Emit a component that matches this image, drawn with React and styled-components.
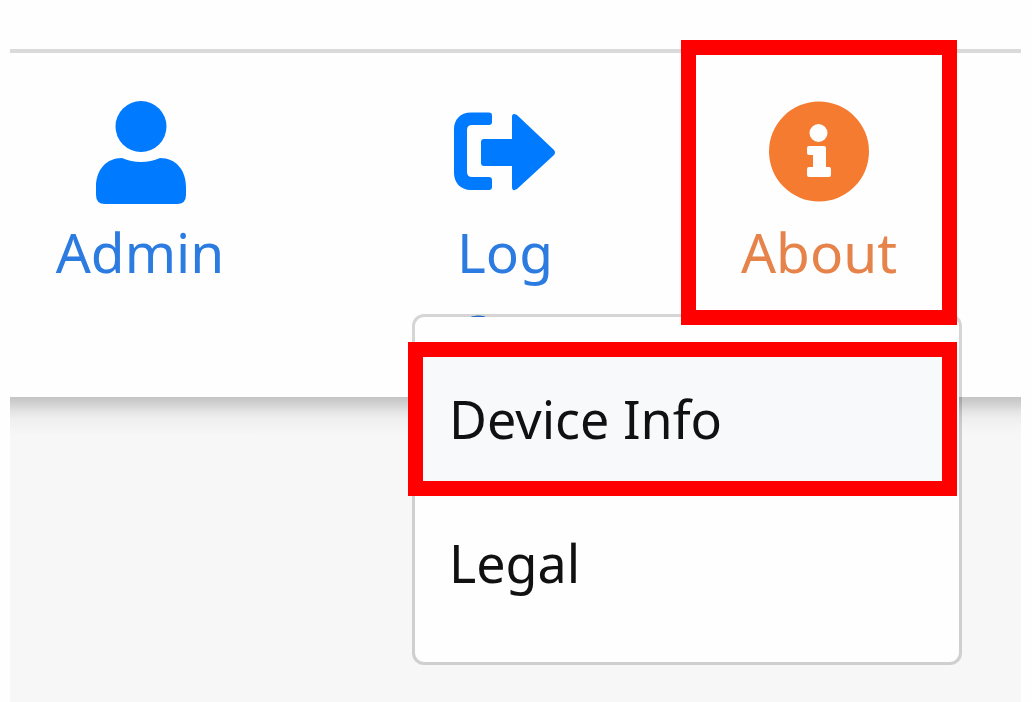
import React from "react";
import styled, { createGlobalStyle } from "styled-components";

const GlobalStyle = createGlobalStyle`
  *, *::before, *::after { box-sizing: border-box; }
  body {
    margin: 0;
    background: #fefefe;
    font-family: "Noto Sans", "Open Sans", sans-serif;
  }
`;

const Page = styled.div`
  min-height: 100vh;
  padding: 49px 11px 0 10px;
  display: flex;
  flex-direction: column;
`;

const Toolbar = styled.nav`
  display: grid;
  grid-template-columns: 260fr 59fr 352fr 276fr 64fr;
  height: 348px;
  border-top: 4px solid #dadada;
  background: #fefefe;
`;

const Content = styled.main`
  flex: 1;
  background: #f7f7f7 linear-gradient(
    #c5c5c5 0px, #cbcbcb 4px, #d6d6d6 9px, #e3e3e3 14px,
    #eeeeee 21px, #f3f3f3 29px, #f7f7f7 38px
  ) no-repeat;
`;

const NavItem = styled.div`
  grid-column: ${(p) => p.$column};
  position: relative;
  display: flex;
  justify-content: center;
  align-items: flex-start;
`;

const NavButton = styled.button`
  display: flex;
  flex-direction: column;
  align-items: center;
  gap: 3px;
  margin: 0;
  padding: 47px 0 0;
  border: 0;
  background: none;
  font: inherit;
  color: ${(p) => p.$color};
  cursor: pointer;
`;

const NavIcon = styled.svg`
  width: 108px;
  height: 108px;
  fill: ${(p) => p.$color};
`;

const NavLabel = styled.span`
  max-width: ${(p) => (p.$narrow ? "120px" : "none")};
  font-size: 55px;
  line-height: 82px;
  text-align: center;
`;

const Menu = styled.div`
  position: absolute;
  z-index: 1;
  top: 261px;
  right: -5px;
  width: 550px;
  padding: 29px 0 28px;
  border: 3px solid rgba(0, 0, 0, 0.16);
  border-radius: 12px;
  background: #fefefe;
  background-clip: padding-box;
`;

const MenuRow = styled.div`
  position: relative;
`;

const MenuLink = styled.a`
  display: block;
  padding: 34px 34px 32px;
  background: ${(p) => (p.$active ? "#f8f9fb" : "transparent")};
  color: #111;
  font-size: 52px;
  line-height: 78px;
  text-decoration: none;
`;

const Highlight = styled.span`
  position: absolute;
  z-index: 2;
  inset: ${(p) => p.$inset};
  border: 15px solid #f00;
  pointer-events: none;
`;

const blue = "#007bff";
const orange = "#f47b30";

function UserIcon() {
  return (
    <NavIcon viewBox="0 0 108 108" $color={blue} aria-hidden="true">
      <circle cx="55" cy="26.5" r="25.5" />
      <path d="M10 87C10 70 20 58 36 58Q45 62 55 62Q65 62 74 58C90 58 100 70 100 87V95Q100 104 91 104H19Q10 104 10 95Z" />
    </NavIcon>
  );
}

function SignOutIcon() {
  return (
    <NavIcon viewBox="0 0 108 108" $color={blue} aria-hidden="true">
      <path d="M20 12.500H38Q41 12.500 41 15.500V22Q41 25 38 25H21Q16 25 16 30V72Q16 77 21 77H38Q41 77 41 80V87Q41 90 38 90H20C9 90 3 82 3 73V29C3 20 9 12.500 20 12.500Z" />
      <path d="M33 39H61V17Q61 12 66 15L103 50Q105 52.500 103 55L66 89Q61 92 61 87V66H33Q30 66 30 63V42Q30 39 33 39Z" />
    </NavIcon>
  );
}

function InfoIcon() {
  return (
    <NavIcon viewBox="0 0 108 108" $color={orange} aria-hidden="true">
      <path
        fillRule="evenodd"
        d="M54 1.500A50 50 0 1 1 54 101.500A50 50 0 1 1 54 1.500ZM53.500 24A9 9 0 1 0 53.500 42A9 9 0 1 0 53.500 24ZM44 46Q42 46 42 48V53Q42 55 44 55H48V67H44Q42 67 42 69V75Q42 77 44 77H64Q66 77 66 75V69Q66 67 64 67H61V48Q61 46 59 46Z"
      />
    </NavIcon>
  );
}

export default function App() {
  return (
    <>
      <GlobalStyle />
      <Page>
        <Toolbar aria-label="Main">
          <NavItem $column={1}>
            <NavButton type="button" $color="#2b7be0">
              <UserIcon />
              <NavLabel>Admin</NavLabel>
            </NavButton>
          </NavItem>
          <NavItem $column={3}>
            <NavButton type="button" $color="#2b7be0">
              <SignOutIcon />
              <NavLabel $narrow>Log Out</NavLabel>
            </NavButton>
          </NavItem>
          <NavItem $column={4}>
            <NavButton type="button" $color="#e5834a" aria-haspopup="true" aria-expanded="true">
              <InfoIcon />
              <NavLabel>About</NavLabel>
            </NavButton>
            <Highlight $inset="-13px 0 72px 0" />
            <Menu>
              <MenuRow>
                <MenuLink href="#device-info" $active>Device Info</MenuLink>
                <Highlight $inset="-4px 2px -6px -7px" />
              </MenuRow>
              <MenuRow>
                <MenuLink href="#legal">Legal</MenuLink>
              </MenuRow>
            </Menu>
          </NavItem>
        </Toolbar>
        <Content />
      </Page>
    </>
  );
}
